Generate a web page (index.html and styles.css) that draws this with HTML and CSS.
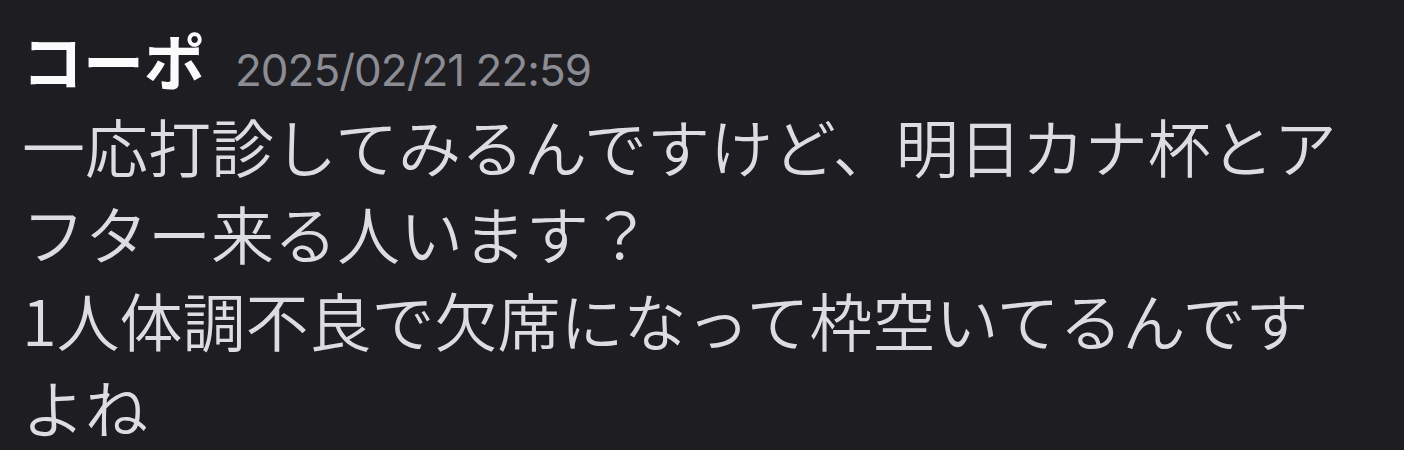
FILE: index.html
```html
<!DOCTYPE html>
<html lang="ja">
<head>
<meta charset="UTF-8" />
<meta name="viewport" content="width=device-width, initial-scale=1.0">
<title>コーポ</title>
<link rel="stylesheet" href="styles.css">
</head>
<body>
  <div class="message">
    <div class="header">
      <span class="name">コーポ</span>
      <span class="time">2025/02/21 22:59</span>
    </div>
    <div class="content">一応打診してみるんですけど、明日カナ杯とアフター来る人います？<br>1人体調不良で欠席になって枠空いてるんですよね</div>
  </div>
</body>
</html>
```

FILE: styles.css
```css
body {
  margin: 0;
  background-color: #1d1d22;
  font-family: "Noto Sans CJK JP", "Noto Sans", sans-serif;
}
.message {
  padding: 29px 40px 0 22px;
}
.header {
  display: flex;
  align-items: baseline;
  gap: 30px;
  line-height: 62px;
}
.name {
  font-size: 61px;
  font-weight: 700;
  color: #fbfbfb;
}
.time {
  font-family: Inter, "Liberation Sans", sans-serif;
  font-size: 44px;
  letter-spacing: -1px;
  color: #8b8c94;
}
.content {
  font-size: 63px;
  font-weight: 350;
  line-height: 87px;
  color: #dcdde2;
}
```
